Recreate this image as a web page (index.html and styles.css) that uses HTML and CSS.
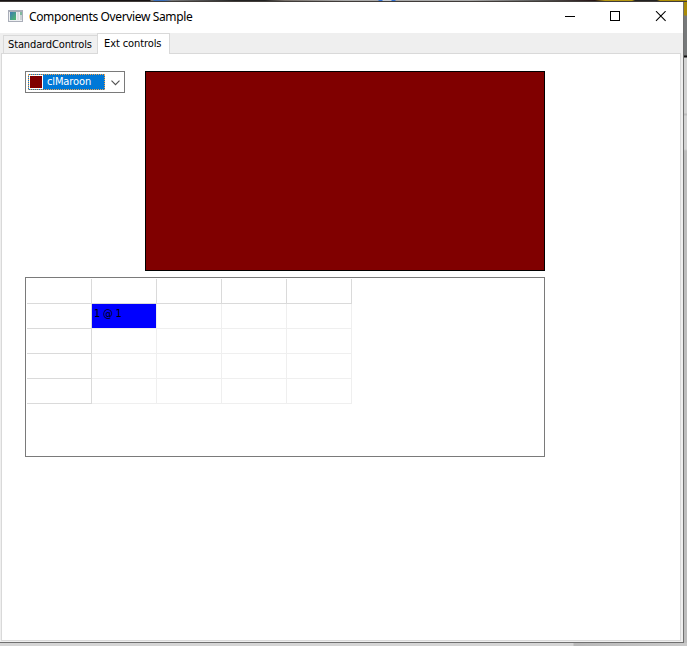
FILE: index.html
```html
<!DOCTYPE html>
<html lang="en">
<head>
<meta charset="utf-8">
<title>Components Overview Sample</title>
<link rel="stylesheet" href="styles.css">
</head>
<body>
<div class="desktop">
  <div class="backdrop-top"></div>
  <div class="window-row">
    <main class="window">
      <header class="titlebar">
        <svg class="app-icon" width="16" height="14" viewBox="0 0 16 14">
          <defs>
            <linearGradient id="pane" x1="0" y1="0" x2="1" y2="1"><stop offset="0" stop-color="#3b79b4"/><stop offset="1" stop-color="#4fbb69"/></linearGradient>
          </defs>
          <path fill="#a9adb8" d="M0 1h15v12H0z"/>
          <path fill="#eef0f2" d="M1 3h13v9H1z"/>
          <path fill="url(#pane)" d="M2 3h6v8H2z"/>
          <path fill="#dcdfe1" d="M9 3h2v8H9z"/>
          <path fill="#80b99d" d="M12 3h2v3h-2z"/>
          <path fill="#cbd2d5" d="M12 6h2v5h-2z"/>
        </svg>
        <span class="title">Components Overview Sample</span>
        <svg class="controls" width="102" height="11" viewBox="0 0 102 11">
          <path d="M0 5.500H10M45.500 .5h9v9h-9z" fill="none" stroke="#000" shape-rendering="crispEdges"/>
          <path d="M91 .2l9.600 9.600M100.600 .2L91 9.800" fill="none" stroke="#000" stroke-width="1.100"/>
        </svg>
      </header>
      <nav class="tabs">
        <div class="tab"><span class="tab-std">StandardControls</span></div>
        <div class="tab active"><span class="tab-ext">Ext controls</span></div>
      </nav>
      <section class="page">
        <div class="upper">
          <div class="combo">
            <div class="choice"><span class="swatch"></span><span class="choice-text">clMaroon</span></div>
            <svg class="chevron" width="9" height="6" viewBox="0 0 9 6"><path d="M.5 .7l4 4 4-4" fill="none" stroke="#505050" stroke-width="1.100"/></svg>
          </div>
          <div class="shape"></div>
        </div>
        <div class="grid-box">
          <div class="grid">
            <i class="f"></i><i class="f"></i><i class="f"></i><i class="f"></i><i class="f"></i>
            <i class="f"></i><i class="sel"><span>1 @ 1</span></i><i></i><i></i><i></i>
            <i class="f"></i><i></i><i></i><i></i><i></i>
            <i class="f"></i><i></i><i></i><i></i><i></i>
            <i class="f"></i><i></i><i></i><i></i><i></i>
          </div>
        </div>
      </section>
    </main>
    <div class="backdrop-right"></div>
  </div>
  <div class="backdrop-bottom"></div>
</div>
</body>
</html>
```
FILE: styles.css
```css
* { box-sizing: border-box; }
body { margin: 0; overflow: hidden; background: #fff; }
.desktop {
  width: 687px; height: 646px;
  display: flex; flex-direction: column;
  font: 11px/14px "DejaVu Sans Condensed", "DejaVu Sans", sans-serif;
  color: #000;
}
.backdrop-top {
  height: 2px;
  background: linear-gradient(90deg, #171414 0 150px, #777 151px 153px, #3b70bd 154px 164px, #777 172px, #222 235px 265px, #77706a 285px, #aaa 345px 378px, #3270d1 379px 382px, #c6cbd2 383px 391px, #3270d1 392px 395px, #aaa 396px 470px, #555 540px, #241313 595px, #b79812 605px 632px, #222 635px 657px, #b09005 660px);
  border-bottom: 1px solid #403c39;
}
.window-row { height: 641px; display: flex; }
.window {
  width: 684px; height: 641px;
  display: flex; flex-direction: column;
  background: #efefef;
  border-right: 1px solid #707070;
  border-bottom: 1px solid #707070;
}
.titlebar {
  height: 31px; flex: none;
  display: flex; align-items: flex-start;
  padding: 8px 16px 0 8px;
  background: #fff;
}
.app-icon { display: block; margin-top: -1px; }
.title {
  margin: -1px 0 0 5px;
  font: 12px/16px "Noto Sans", "Open Sans", sans-serif;
  letter-spacing: -.36px;
  white-space: nowrap;
}
.controls { display: block; margin-left: auto; margin-top: 1px; }
.tabs {
  height: 20px; flex: none;
  display: flex; align-items: flex-end;
  padding-left: 3px;
}
.tab {
  width: 94px; height: 18px;
  padding: 2px 0 0 4px;
  background: #f0f0f0;
  border: 1px solid #d9d9d9; border-right: 0; border-bottom: 0;
  white-space: nowrap;
}
.tab.active {
  width: 73px; height: 21px;
  margin-bottom: -1px; padding: 3px 0 0 6px;
  border-right: 1px solid #d9d9d9;
  background: #fff;
  position: relative;
}
.tab-std { letter-spacing: -.13px; }
.tab-ext { letter-spacing: -.1px; }
.page {
  width: 680px; height: 588px; flex: none;
  margin-left: 1px;
  padding: 17px 0 0 23px;
  border: 1px solid #d9d9d9;
  background: #fff;
}
.upper { display: flex; gap: 20px; align-items: flex-start; }
.combo {
  width: 100px; height: 22px;
  display: flex; align-items: center;
  padding: 0 4px 0 2px;
  border: 1px solid #7a7a7a;
}
.choice {
  width: 77px; height: 16px;
  display: flex; align-items: center;
  border: 1px dotted #f5a34a;
  background: #0078d7; color: #fff;
}
.swatch { width: 14px; height: 14px; flex: none; background: maroon; border: 1px solid #fff; }
.choice-text { margin-left: 4px; letter-spacing: -.12px; }
.chevron { display: block; margin: 1px 0 0 auto; }
.shape { width: 400px; height: 200px; background: maroon; border: 1px solid #000; }
.grid-box {
  width: 520px; height: 180px;
  margin-top: 6px; padding: 1px;
  border: 1px solid #7a7a7a;
}
.grid { display: grid; grid-template-columns: repeat(5, 65px); grid-auto-rows: 25px; width: 325px; }
.grid i {
  font-style: normal;
  border-right: 1px solid #efefef;
  border-bottom: 1px solid #efefef;
}
.grid .f { border-color: #dadada; }
.grid .sel { padding: 3px 0 0 2px; background: #00f; background-clip: padding-box; }
.sel span { letter-spacing: -.25px; }
.backdrop-right {
  width: 3px; height: 641px;
  background: linear-gradient(180deg, #a88a08 0 13px, #77797a 14px 53px, #111 54px 55px, #d3d3d3 56px 111px, #bdbdbd 112px 113px, #d3d3d3 114px 147px, #bdbdbd 149px);
}
.backdrop-bottom { height: 3px; background: linear-gradient(90deg, #d5d5d5 0 573px, #b8b8b8 574px, #c9c9c9); }
```
